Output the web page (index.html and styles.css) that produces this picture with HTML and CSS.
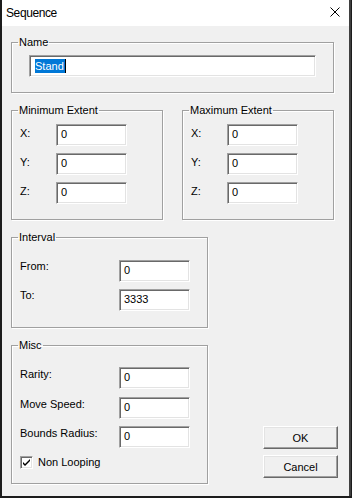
FILE: index.html
```html
<!DOCTYPE html>
<html lang="en">
<head>
  <meta charset="UTF-8" />
  <title>Sequence</title>
  <link rel="stylesheet" href="styles.css">
</head>
<body>
  <div class="window">
    <div class="titlebar">
      <span class="title">Sequence</span>
      <svg class="close" width="10" height="10" viewBox="0 0 10 10">
        <path d="M0.5 0.5 L9.5 9.5 M9.5 0.5 L0.5 9.5" stroke="#000" stroke-width="1" fill="none" />
      </svg>
    </div>

    <div class="client">
      <fieldset class="group name-group">
        <legend>Name</legend>
        <div class="field wide"><span class="sel">Stand</span><span class="caret"></span></div>
      </fieldset>

      <div class="extents">
        <fieldset class="group extent">
          <legend>Minimum Extent</legend>
          <div class="row"><label>X:</label><div class="field">0</div></div>
          <div class="row"><label>Y:</label><div class="field">0</div></div>
          <div class="row"><label>Z:</label><div class="field">0</div></div>
        </fieldset>
        <fieldset class="group extent">
          <legend>Maximum Extent</legend>
          <div class="row"><label>X:</label><div class="field">0</div></div>
          <div class="row"><label>Y:</label><div class="field">0</div></div>
          <div class="row"><label>Z:</label><div class="field">0</div></div>
        </fieldset>
      </div>

      <div class="lower">
        <div class="left-col">
          <fieldset class="group interval">
            <legend>Interval</legend>
            <div class="row"><label>From:</label><div class="field">0</div></div>
            <div class="row"><label>To:</label><div class="field">3333</div></div>
          </fieldset>
          <fieldset class="group misc">
            <legend>Misc</legend>
            <div class="row"><label>Rarity:</label><div class="field">0</div></div>
            <div class="row"><label>Move Speed:</label><div class="field">0</div></div>
            <div class="row"><label>Bounds Radius:</label><div class="field">0</div></div>
            <div class="check-row">
              <span class="checkbox">
                <svg width="9" height="9" viewBox="0 0 9 9">
                  <path d="M1 4 L3 6 L8 1 L8 3 L3 8 L1 6 Z" fill="#000" />
                </svg>
              </span>
              <span>Non Looping</span>
            </div>
          </fieldset>
        </div>

        <div class="buttons">
          <button type="button">OK</button>
          <button type="button">Cancel</button>
        </div>
      </div>
    </div>
  </div>
</body>
</html>
```

FILE: styles.css
```css
body {
  margin: 0;
  background: #1c1c1c;
  font-family: 'Liberation Sans', Arial, sans-serif;
  font-size: 11px;
  color: #000;
}

.window {
  margin-left: 2px;
  width: 347px;
  height: 496px;
  border-right: 2px solid #3f3f3f;
  background: #f0f0f0;
  display: flex;
  flex-direction: column;
}

.titlebar {
  height: 26px;
  background: #fff;
  display: flex;
  align-items: center;
  padding-left: 4px;
}

.title {
  font-size: 12px;
  line-height: 26px;
  letter-spacing: -0.4px;
}

.close {
  margin-left: auto;
  margin-right: 9px;
  margin-top: -3px;
}

.client {
  padding: 0 11px 0 9px;
}

.group {
  margin: 0;
  padding: 0 0 0 6px;
  border: 1px solid #a0a0a0;
  box-shadow: inset 1px 1px 0 #fff, 1px 1px 0 #fff;
  box-sizing: border-box;
}

.group legend {
  padding: 0 1px;
  line-height: 13px;
}

.name-group {
  margin-top: 10px;
  width: 323px;
  padding-top: 6px;
  padding-bottom: 15px;
}

.field {
  box-sizing: border-box;
  width: 71px;
  height: 22px;
  padding: 1px 4px 0;
  line-height: 17px;
  background: #fff;
  border: 1px solid;
  border-color: #a0a0a0 #fff #fff #a0a0a0;
  box-shadow: inset 1px 1px 0 #696969, inset -1px -1px 0 #e3e3e3;
  white-space: nowrap;
}

.field.wide {
  width: 287px;
  margin-left: 11px;
  display: flex;
  align-items: center;
  padding: 0 0 0 5px;
}

.sel {
  background: #0078d7;
  color: #fff;
  line-height: 14px;
  padding-right: 1px;
}

.caret {
  width: 1px;
  height: 14px;
  background: #000;
}

.row {
  display: flex;
  align-items: flex-start;
  margin-bottom: 7px;
}

.row label {
  margin-left: 2px;
  line-height: 13px;
}

.extents {
  display: flex;
  gap: 19px;
  margin-top: 11px;
}

.extent {
  width: 152px;
  padding-top: 7px;
  padding-bottom: 8px;
}

.extent label {
  width: 36px;
  padding-top: 3px;
}

.lower {
  display: flex;
}

.left-col {
  width: 197px;
}

.interval {
  margin-top: 11px;
  padding-top: 16px;
  padding-bottom: 9px;
}

.interval label,
.misc label {
  width: 99px;
}

.misc label {
  padding-top: 1px;
}

.misc {
  margin-top: 11px;
  padding-top: 15px;
  padding-bottom: 14px;
}

.misc .row:first-of-type {
  margin-bottom: 8px;
}

.misc .row:nth-of-type(3) {
  margin-bottom: 8px;
}

.check-row {
  display: flex;
  align-items: center;
  gap: 5px;
  margin-left: 2px;
  line-height: 13px;
}

.checkbox {
  box-sizing: border-box;
  width: 13px;
  height: 13px;
  background: #fff;
  border: 1px solid;
  border-color: #a0a0a0 #fff #fff #a0a0a0;
  box-shadow: inset 1px 1px 0 #696969, inset -1px -1px 0 #e3e3e3;
  display: flex;
  align-items: center;
  justify-content: center;
}

.buttons {
  margin-left: auto;
  align-self: flex-end;
  margin-bottom: 6px;
  display: flex;
  flex-direction: column;
  gap: 6px;
}

button {
  width: 75px;
  height: 23px;
  padding: 0;
  font-family: 'Liberation Sans', Arial, sans-serif;
  font-size: 11px;
  color: #000;
  background: #f0f0f0;
  border: 1px solid;
  border-color: #fff #696969 #696969 #fff;
  box-shadow: inset -1px -1px 0 #a0a0a0, inset 1px 1px 0 #e3e3e3;
}
```
